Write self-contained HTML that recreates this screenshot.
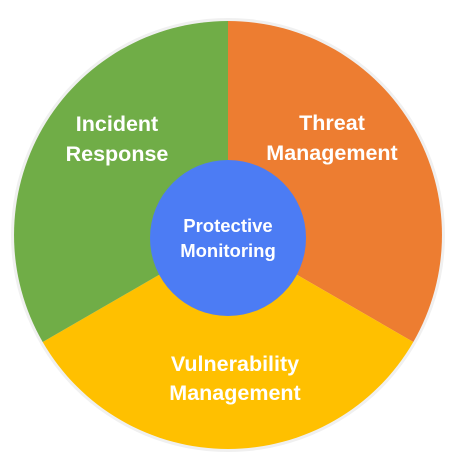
<!DOCTYPE html>
<html><head><style>
html,body{margin:0;padding:0;background:#fff;width:455px;height:466px;overflow:hidden}
svg text{font-family:"Liberation Sans",sans-serif;font-weight:bold;fill:#fff;text-anchor:middle}
</style></head><body>
<svg width="455" height="466" viewBox="0 0 455 466" xmlns="http://www.w3.org/2000/svg">
<circle cx="228" cy="235" r="217" fill="#f0f0f0"/>
<path d="M228 235 L228 21 A214 214 0 0 1 413.3 342 Z" fill="#ED7D31"/>
<path d="M228 235 L413.3 342 A214 214 0 0 1 42.7 342 Z" fill="#FFC000"/>
<path d="M228 235 L42.7 342 A214 214 0 0 1 228 21 Z" fill="#70AD47"/>
<circle cx="228" cy="238" r="78" fill="#4C7CF4"/>
<text x="117" y="131" font-size="21.5">Incident</text>
<text x="117" y="161" font-size="21.5">Response</text>
<text x="332" y="130" font-size="21.5">Threat</text>
<text x="332" y="160" font-size="21.5">Management</text>
<text x="228" y="232" font-size="18.5">Protective</text>
<text x="228" y="257" font-size="18.5">Monitoring</text>
<text x="235" y="371" font-size="21.5">Vulnerability</text>
<text x="235" y="400" font-size="21.5">Management</text>
</svg>
</body></html>
